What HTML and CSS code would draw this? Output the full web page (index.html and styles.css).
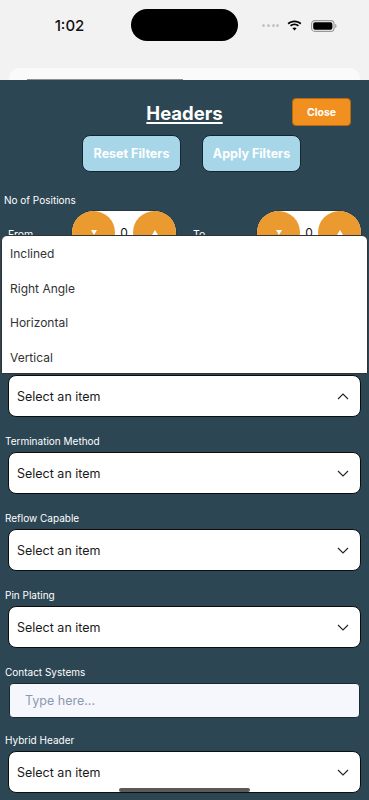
FILE: index.html
```html
<!DOCTYPE html>
<html>
<head>
<meta charset="utf-8">
<link rel="stylesheet" href="styles.css">
</head>
<body>
<div class="screen">
  <div class="status">
    <div class="time">1:02</div>
    <div class="island"></div>
    <div class="status-right">
      <span class="dots"><i></i><i></i><i></i><i></i></span>
      <svg class="wifi" width="15" height="11" viewBox="0 0 15 11"><path d="M7.5 2.2c2.2 0 4.2.8 5.7 2.2l1.2-1.3C12.6 1.4 10.2.4 7.5.4S2.4 1.4.6 3.1l1.2 1.3c1.5-1.4 3.5-2.2 5.7-2.2z" fill="#000"/><path d="M7.5 5.3c1.3 0 2.4.5 3.3 1.3l1.2-1.3C10.8 4.2 9.2 3.5 7.5 3.5S4.2 4.2 3 5.3l1.2 1.3c.9-.8 2-1.3 3.3-1.3z" fill="#000"/><path d="M7.5 10.6l2.1-2.3c-.6-.5-1.3-.8-2.1-.8s-1.5.3-2.1.8z" fill="#000"/></svg>
      <svg class="battery" width="26" height="12" viewBox="0 0 26 12"><rect x="0.6" y="0.6" width="22.4" height="10.8" rx="3.2" fill="none" stroke="#999" stroke-width="1.1"/><rect x="2.2" y="2.2" width="19.2" height="7.6" rx="1.8" fill="#000"/><path d="M24.2 4v4c.8-.3 1.3-1.1 1.3-2s-.5-1.7-1.3-2z" fill="#999"/></svg>
    </div>
  </div>
  <div class="bg-card"><div class="bg-line"></div></div>

  <div class="panel">
    <div class="title-row">
      <span></span>
      <h1 class="title">Headers</h1>
      <button class="close">Close</button>
    </div>
    <div class="actions">
      <button class="action">Reset Filters</button>
      <button class="action">Apply Filters</button>
    </div>

    <div class="label label-first">No of Positions</div>
    <div class="range">
      <div class="range-col">
        <span class="range-label">From</span>
        <div class="stepper">
          <span class="step-btn"><i class="tri-down"></i></span>
          <span class="step-val">0</span>
          <span class="step-btn"><i class="tri-up"></i></span>
        </div>
      </div>
      <div class="range-col">
        <span class="range-label">To</span>
        <div class="stepper">
          <span class="step-btn"><i class="tri-down"></i></span>
          <span class="step-val">0</span>
          <span class="step-btn"><i class="tri-up"></i></span>
        </div>
      </div>
    </div>

    <div class="covered"></div>
    <div class="field">
      <div class="label label-empty"></div>
      <div class="select"><span>Select an item</span><svg class="chev" width="12" height="7" viewBox="0 0 12 7"><path d="M1 6l5-5 5 5" fill="none" stroke="#222" stroke-width="1.1"/></svg></div>
    </div>
    <div class="field">
      <div class="label">Termination Method</div>
      <div class="select"><span>Select an item</span><svg class="chev" width="12" height="7" viewBox="0 0 12 7"><path d="M1 1l5 5 5-5" fill="none" stroke="#222" stroke-width="1.1"/></svg></div>
    </div>
    <div class="field">
      <div class="label">Reflow Capable</div>
      <div class="select"><span>Select an item</span><svg class="chev" width="12" height="7" viewBox="0 0 12 7"><path d="M1 1l5 5 5-5" fill="none" stroke="#222" stroke-width="1.1"/></svg></div>
    </div>
    <div class="field">
      <div class="label">Pin Plating</div>
      <div class="select"><span>Select an item</span><svg class="chev" width="12" height="7" viewBox="0 0 12 7"><path d="M1 1l5 5 5-5" fill="none" stroke="#222" stroke-width="1.1"/></svg></div>
    </div>
    <div class="field field-input">
      <div class="label">Contact Systems</div>
      <input class="text-input" type="text" placeholder="Type here...">
    </div>
    <div class="field">
      <div class="label">Hybrid Header</div>
      <div class="select"><span>Select an item</span><svg class="chev" width="12" height="7" viewBox="0 0 12 7"><path d="M1 1l5 5 5-5" fill="none" stroke="#222" stroke-width="1.1"/></svg></div>
    </div>

    <ul class="dropdown">
      <li>Inclined</li>
      <li>Right Angle</li>
      <li>Horizontal</li>
      <li>Vertical</li>
    </ul>
  </div>
  <div class="home"></div>
</div>
</body>
</html>
```

FILE: styles.css
```css
* { box-sizing: border-box; }
html, body { margin: 0; padding: 0; }
body {
  background: #f2f2f2;
  font-family: Inter, "Noto Sans", sans-serif;
  width: 369px;
  height: 800px;
  overflow: hidden;
}
.screen { position: relative; width: 369px; height: 800px; overflow: hidden; }

.status {
  height: 68px;
  display: grid;
  grid-template-columns: 131px 107px 1fr;
  align-items: start;
  padding-top: 10px;
}
.time {
  font-size: 15px;
  font-weight: 500;
  color: #111;
  text-align: center;
  padding-left: 8px;
  line-height: 31px;
}
.island { height: 32px; background: #000; border-radius: 16px; margin-top: -1px; }
.status-right {
  display: flex;
  align-items: center;
  height: 31px;
  padding-left: 24px;
  gap: 7px;
}
.dots { display: flex; gap: 1.8px; margin-right: 1px; }
.dots i { width: 3px; height: 3px; border-radius: 50%; background: #c4c4c4; display: block; }
.wifi { display: block; }
.battery { display: block; margin-left: 2px; }

.bg-card {
  height: 12px;
  margin: 0 9px;
  background: #fafafa;
  border-radius: 10px 10px 0 0;
  padding-top: 11px;
}
.bg-line { width: 156px; height: 1px; margin-left: 18px; background: #8a8f94; }

.panel {
  position: relative;
  height: 720px;
  background: #2c4654;
  padding: 18px 0 0;
}
.title-row {
  display: grid;
  grid-template-columns: 1fr auto 1fr;
  align-items: center;
  height: 28px;
}
.title {
  margin: 0;
  font-size: 18.5px;
  font-weight: 700;
  color: #fff;
  text-decoration: underline;
  text-underline-offset: 2px;
  text-decoration-thickness: 1.5px;
  line-height: 22px;
  padding-top: 2px;
}
.close {
  justify-self: end;
  margin-right: 18px;
  width: 59px;
  height: 28px;
  border: 1px solid #b86a10;
  border-radius: 4px;
  background: #f18f1f;
  color: #fff;
  font-family: Inter, sans-serif;
  font-size: 10.5px;
  font-weight: 700;
  padding: 0;
}
.actions {
  display: flex;
  justify-content: center;
  gap: 21px;
  margin-top: 9px;
  padding-left: 14px;
}
.action {
  width: 99px;
  height: 37px;
  border: 1px solid #142530;
  border-radius: 8px;
  background: #a7d6e9;
  color: #fff;
  font-family: Inter, sans-serif;
  font-size: 12.5px;
  font-weight: 700;
  padding: 0;
}

.label {
  font-size: 10px;
  line-height: 13px;
  height: 13px;
  color: #fff;
  padding-left: 5px;
  margin-bottom: 4px;
}
.label-first { margin-top: 22px; padding-left: 4px; }

.range {
  display: grid;
  grid-template-columns: 168px 168px;
  column-gap: 17px;
  padding-left: 8px;
  margin-bottom: 27px;
}
.range-col { display: flex; align-items: flex-end; }
.range-label {
  width: 64px;
  font-size: 10.5px;
  color: #fff;
  line-height: 14px;
  padding-bottom: 12px;
}
.stepper {
  width: 104px;
  height: 43px;
  display: flex;
  align-items: center;
  background: #fff;
  border-radius: 22px;
  box-shadow: 0 0 0 0.5px #1a2a33;
}
.step-btn {
  width: 43px;
  height: 43px;
  border-radius: 50%;
  background: #ea9a2e;
  display: flex;
  align-items: center;
  justify-content: center;
  flex: none;
}
.step-val { flex: 1; text-align: center; font-size: 12px; color: #111; }
.tri-down, .tri-up { width: 0; height: 0; display: block; border-left: 3px solid transparent; border-right: 3px solid transparent; }
.tri-down { border-top: 5px solid #fff; }
.tri-up { border-bottom: 5px solid #fff; }

.covered { height: 77px; }

.field { margin-bottom: 18px; }
.field-input { margin-bottom: 16px; }
.select {
  margin: 0 8px;
  height: 42px;
  background: #fff;
  border: 1px solid #0d0d0d;
  border-radius: 8px;
  display: flex;
  align-items: center;
  justify-content: space-between;
  padding: 1px 11px 0 8px;
  font-size: 12.5px;
  color: #1a1a1a;
}
.chev { display: block; }
.text-input {
  display: block;
  margin: 0 9px;
  width: 351px;
  height: 35px;
  background: #f5f7fc;
  border: 1px solid #1a2a33;
  border-radius: 4px;
  padding: 0 15px;
  font-family: Inter, sans-serif;
  font-size: 12.5px;
  outline: none;
}
.text-input::placeholder { color: #8c9ab1; }

.dropdown {
  position: absolute;
  top: 155px;
  left: 1px;
  right: 1px;
  height: 139px;
  margin: 0;
  padding: 1px 0 0;
  list-style: none;
  background: #fff;
  border: 1px solid #333;
  border-radius: 6px 6px 0 0;
}
.dropdown li {
  height: 34.5px;
  line-height: 34.5px;
  padding-left: 8px;
  font-size: 12px;
  color: #333;
}

.home {
  position: absolute;
  left: 119px;
  bottom: 8px;
  width: 131px;
  height: 4px;
  border-radius: 2px;
  background: #5a5a5a;
}
```
